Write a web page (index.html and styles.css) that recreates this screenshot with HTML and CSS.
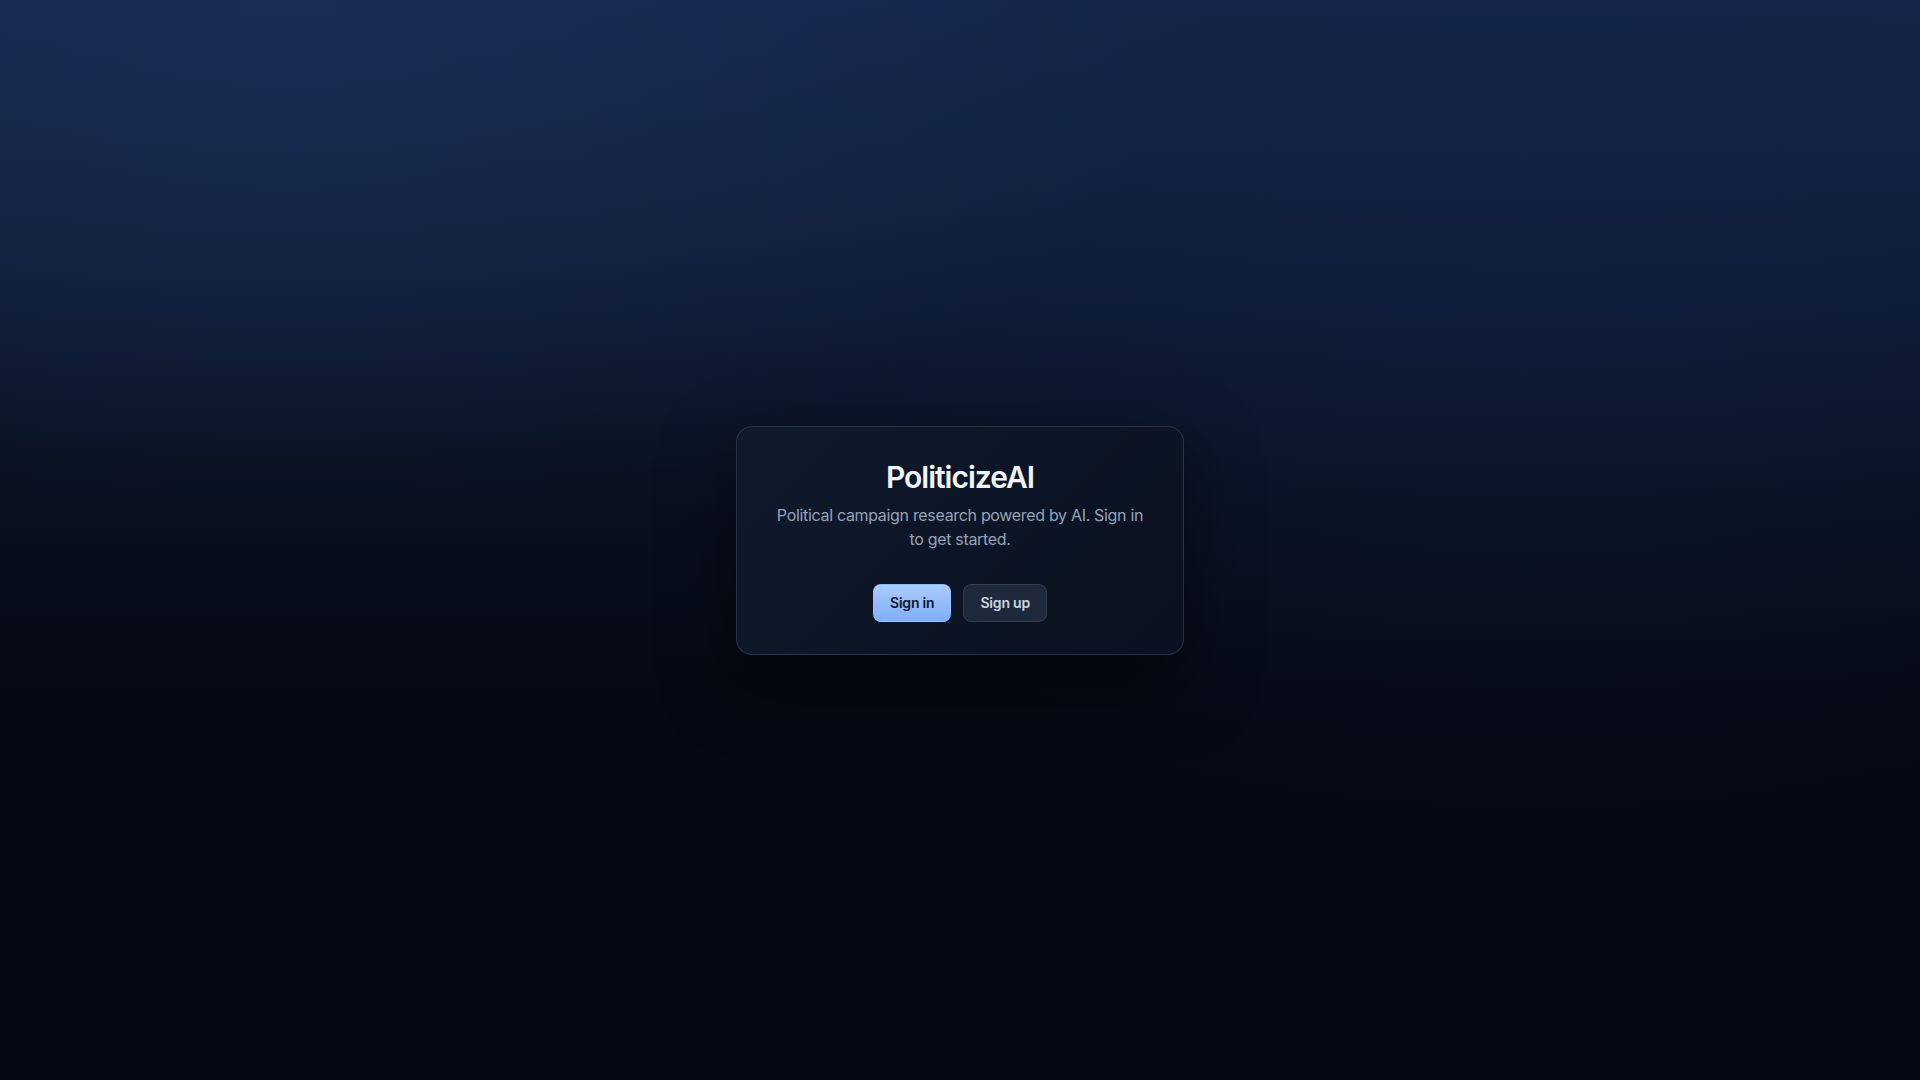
FILE: index.html
```html
<!DOCTYPE html>
<html lang="en">
<head>
<meta charset="utf-8">
<title>PoliticizeAI</title>
<link rel="stylesheet" href="styles.css">
</head>
<body>
<main class="page">
  <section class="card">
    <h1 class="title">PoliticizeAI</h1>
    <p class="subtitle">Political campaign research powered by AI. Sign in to get started.</p>
    <div class="actions">
      <button class="btn btn-primary" type="button">Sign in</button>
      <button class="btn btn-secondary" type="button">Sign up</button>
    </div>
  </section>
</main>
</body>
</html>
```

FILE: styles.css
```css
* { box-sizing: border-box; }
html, body { margin: 0; padding: 0; height: 100%; }
body {
  font-family: Inter, "Noto Sans", "Liberation Sans", sans-serif;
  background-color: #050913;
  background-image:
    radial-gradient(ellipse 900px 520px at 15% 0%, rgba(30, 52, 92, 0.55), rgba(30, 52, 92, 0) 100%),
    radial-gradient(ellipse 1000px 600px at 80% 20%, rgba(16, 34, 70, 0.45), rgba(16, 34, 70, 0) 100%),
    linear-gradient(180deg, #15264a 0%, #11203e 18%, #0c172c 34%, #080f1d 48%, #050913 64%, #050913 100%);
  color: #e2e8f0;
}
.page {
  min-height: 100vh;
  display: flex;
  align-items: center;
  justify-content: center;
}
.card {
  width: 448px;
  padding: 32px;
  border: 1px solid rgba(100, 116, 139, 0.32);
  border-radius: 16px;
  background: linear-gradient(135deg, #0f1a2d 0%, #0c1525 55%, #0a1120 100%);
  box-shadow: 0 25px 70px 0 rgba(0, 0, 0, 0.5);
  text-align: center;
}
.title {
  margin: 0;
  font-size: 30px;
  line-height: 36px;
  font-weight: 600;
  letter-spacing: -1px;
  color: #f1f5f9;
}
.subtitle {
  margin: 8px 0 0;
  font-size: 16px;
  line-height: 24px;
  letter-spacing: -0.32px;
  color: #94a3b8;
}
.actions {
  margin-top: 33px;
  display: flex;
  justify-content: center;
  gap: 12px;
}
.btn {
  font-family: inherit;
  font-size: 14px;
  line-height: 20px;
  font-weight: 600;
  letter-spacing: -0.2px;
  padding: 8px 16px;
  border-radius: 8px;
  cursor: pointer;
}
.btn-primary {
  color: #0f172a;
  border: 1px solid rgba(147, 197, 253, 0.6);
  background: linear-gradient(180deg, #abcbfc 0%, #93bbfa 55%, #7eaef6 100%);
}
.btn-secondary {
  color: #cbd5e1;
  border: 1px solid #334155;
  background: #1e293b;
}
```
